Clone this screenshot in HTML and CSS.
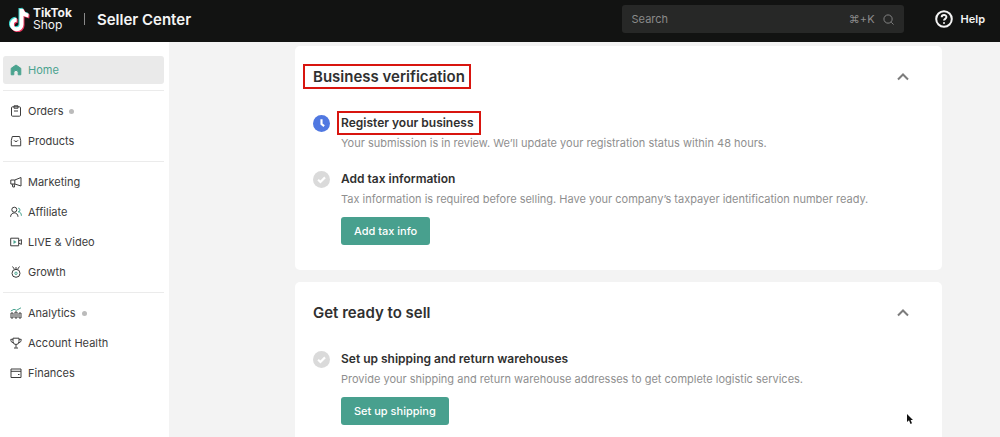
FILE: index.html
```html
<!DOCTYPE html>
<html lang="en">
<head>
  <meta charset="UTF-8">
  <meta name="viewport" content="width=device-width, initial-scale=1.0">
  <title>TikTok Shop Seller Center</title>
  <link rel="stylesheet" href="styles.css">
</head>
<body>
  <!-- Header -->
  <header class="topbar">
    <a href="#" class="brand">
      <svg class="brand-logo" viewBox="0 0 22 26">
        <path class="note note-cyan" d="M11.500 2v15.500a4.800 4.800 0 1 1-4.800-4.800M11.500 2c.5 4 3 6 7 6.500"/>
        <path class="note note-red" d="M13.500 4v15.500a4.800 4.800 0 1 1-4.800-4.800M13.500 4c.5 4 3 6 7 6.500"/>
        <path class="note" d="M12.500 3v15.500a4.800 4.800 0 1 1-4.800-4.800M12.500 3c.5 4 3 6 7 6.500"/>
      </svg>
      <span class="brand-name"><strong>TikTok</strong><span>Shop</span></span>
    </a>
    <span class="brand-divider"></span>
    <span class="product-name">Seller Center</span>
    <label class="search">
      <input type="search" placeholder="Search" aria-label="Search">
      <span class="shortcut">⌘+K</span>
      <svg class="search-icon" viewBox="0 0 12 12"><circle cx="5.500" cy="5.500" r="4.500"/><path d="M9 9l2.500 2.500"/></svg>
    </label>
    <a href="#" class="help">
      <svg class="help-icon" viewBox="0 0 18 18"><circle cx="9" cy="9" r="7.800"/><path d="M6.700 7.300c0-3 4.700-3 4.700-.2 0 1.700-2.400 1.800-2.400 3.500M9 12.200v1.600"/></svg>
      Help
    </a>
  </header>

  <div class="layout">
    <!-- Sidebar -->
    <nav class="sidebar">
      <ul class="menu">
        <li><a href="#" class="menu-link active">
          <svg class="icon" viewBox="0 0 12 12"><path class="solid" d="M6 1 1.200 4.300v6.500h2.600V8.500a2.200 2.200 0 0 1 4.400 0v2.300h2.600V4.300z"/></svg>Home</a></li>
      </ul>
      <ul class="menu">
        <li><a href="#" class="menu-link">
          <svg class="icon" viewBox="0 0 12 12"><rect x="1.500" y="1.800" width="9" height="9.400" rx="1"/><path d="M4 .8h4v2.400H4zM4 6h4"/></svg>Orders<span class="dot"></span></a></li>
        <li><a href="#" class="menu-link">
          <svg class="icon" viewBox="0 0 12 12"><path d="M2.300 1.500h7.400l1 4v5.300H1.300V5.500zM4 5.300c.7 1.600 3.300 1.600 4 0"/></svg>Products</a></li>
      </ul>
      <ul class="menu">
        <li><a href="#" class="menu-link">
          <svg class="icon" viewBox="0 0 12 12"><path d="M.8 4h4L11 1.500v8.500L4.800 8h-4zM4.800 4v4M2.200 8l.6 3h1.700L4.200 8"/></svg>Marketing</a></li>
        <li><a href="#" class="menu-link">
          <svg class="icon" viewBox="0 0 12 12"><circle cx="4.300" cy="3.700" r="2.500"/><path d="M.6 10.800c0-5.200 7.400-5.200 7.400 0"/><path class="accent" d="M8.200 2.200a1.800 1.800 0 0 1 0 3.600c1.800 0 3.200 1.200 3.200 4"/></svg>Affiliate</a></li>
        <li><a href="#" class="menu-link">
          <svg class="icon" viewBox="0 0 12 12"><path d="M.7 2.200h8v7.600h-8zM8.700 5l2.700-1.400v4.800L8.700 7"/><path class="accent-fill" d="M3.500 4 6.500 6 3.500 8z"/></svg>LIVE &amp; Video</a></li>
        <li><a href="#" class="menu-link">
          <svg class="icon" viewBox="0 0 12 12"><circle cx="6" cy="7.300" r="4"/><path d="M2.500.5l2 2.800M9.500.5l-2 2.800M6 1v2.200"/><circle class="accent" cx="6" cy="7.300" r="1.200"/></svg>Growth</a></li>
      </ul>
      <ul class="menu">
        <li><a href="#" class="menu-link">
          <svg class="icon" viewBox="0 0 12 12"><path d="M1 6h2v5H1zM5 5h2v6H5zM9 6h2v5H9z"/><path class="accent" d="M.8 4 4 2.300l2.500 1L11 .8"/></svg>Analytics<span class="dot"></span></a></li>
        <li><a href="#" class="menu-link">
          <svg class="icon" viewBox="0 0 12 12"><path d="M3 1.200h6v3.300a3 3 0 0 1-6 0zM3 2.300H.8c0 2.200.7 3.200 2.400 3.400M9 2.300h2.200c0 2.200-.7 3.200-2.400 3.400M6 7.500v3.200M4 11h4"/></svg>Account Health</a></li>
        <li><a href="#" class="menu-link">
          <svg class="icon" viewBox="0 0 12 12"><path d="M1 2h10v8.500H1zM1 4.300h10M8 7.500h1.500"/></svg>Finances</a></li>
      </ul>
    </nav>

    <!-- Setup steps -->
    <main class="content">
      <section class="card">
        <div class="card-header">
          <h2><span class="marked">Business verification</span></h2>
          <button class="toggle" aria-label="Collapse business verification">
            <svg viewBox="0 0 12 8"><path d="M1 6.500l5-5 5 5"/></svg>
          </button>
        </div>
        <div class="step">
          <svg class="status" viewBox="0 0 16 16"><circle class="pending" cx="8" cy="8" r="8"/><path d="M8 4v4.500l2.500 2"/></svg>
          <div class="step-info">
            <h3><span class="marked marked-small">Register your business</span></h3>
            <p>Your submission is in review. We’ll update your registration status within 48 hours.</p>
          </div>
        </div>
        <div class="step">
          <svg class="status" viewBox="0 0 16 16"><circle cx="8" cy="8" r="8"/><path d="M4.800 8.200l2.200 2.100 4.300-4.300"/></svg>
          <div class="step-info">
            <h3>Add tax information</h3>
            <p>Tax information is required before selling. Have your company’s taxpayer identification number ready.</p>
            <button class="action">Add tax info</button>
          </div>
        </div>
      </section>

      <section class="card">
        <div class="card-header">
          <h2>Get ready to sell</h2>
          <button class="toggle" aria-label="Collapse get ready to sell">
            <svg viewBox="0 0 12 8"><path d="M1 6.500l5-5 5 5"/></svg>
          </button>
        </div>
        <div class="step">
          <svg class="status" viewBox="0 0 16 16"><circle cx="8" cy="8" r="8"/><path d="M4.800 8.200l2.200 2.100 4.300-4.300"/></svg>
          <div class="step-info">
            <h3>Set up shipping and return warehouses</h3>
            <p>Provide your shipping and return warehouse addresses to get complete logistic services.</p>
            <button class="action">Set up shipping</button>
          </div>
        </div>
      </section>
    </main>
  </div>

  <svg class="pointer" viewBox="0 0 8 12"><path d="M1 1v8l2-1.700L4.500 11 6 10.300 4.600 7H7z"/></svg>
</body>
</html>
```
FILE: styles.css
```css
/* General */
* {
  box-sizing: border-box;
}
body {
  margin: 0;
  height: 100vh;
  display: flex;
  flex-direction: column;
  overflow: hidden;
  position: relative;
  font-family: Inter, "Liberation Sans", sans-serif;
  font-size: 11px;
  background-color: #f3f3f3;
  color: #3c3c3c;
}
a {
  color: inherit;
  text-decoration: none;
}
button,
input {
  font-family: inherit;
}
svg {
  display: block;
  flex-shrink: 0;
  fill: none;
  stroke: currentColor;
}
/* Header */
.topbar {
  flex-shrink: 0;
  height: 42px;
  padding: 0 15px 4px 9px;
  display: flex;
  align-items: center;
  background-color: #121312;
  color: #f4f4f4;
}
.brand {
  display: flex;
  align-items: center;
  gap: 2px;
}
.brand-logo {
  width: 22px;
  height: 26px;
}
.note {
  stroke: #fff;
  stroke-width: 4;
}
.note-cyan {
  stroke: #3fd6cf;
}
.note-red {
  stroke: #e8365d;
}
.brand-name {
  display: flex;
  flex-direction: column;
  font-size: 12px;
  line-height: 12px;
}
.brand-divider {
  width: 1px;
  height: 12px;
  margin: 0 12px;
  background-color: #8a8a8a;
}
.product-name {
  font-size: 15px;
  font-weight: 600;
}
.search {
  width: 282px;
  height: 28px;
  margin-left: auto;
  padding: 0 10px;
  display: flex;
  align-items: center;
  gap: 8px;
  border-radius: 3px;
  background-color: #272827;
  color: #8a8a8a;
}
.search input {
  flex: 1;
  min-width: 0;
  padding: 0;
  border: none;
  outline: none;
  background: none;
  font-size: 11px;
  color: #f4f4f4;
}
.search input::placeholder {
  color: #8a8a8a;
}
.search-icon {
  width: 11px;
  height: 11px;
}
.help {
  margin-left: 31px;
  display: flex;
  align-items: center;
  gap: 8px;
  font-weight: 600;
}
.help-icon {
  width: 18px;
  height: 18px;
  stroke-width: 2;
}
/* Sidebar */
.layout {
  flex: 1;
  min-height: 0;
  display: flex;
}
.sidebar {
  width: 169px;
  flex-shrink: 0;
  padding: 8px 5px 0 3px;
  background-color: #fff;
}
.menu {
  margin: 0;
  padding: 5px 0;
  list-style: none;
}
.menu + .menu {
  border-top: 1px solid #ebebeb;
}
.menu li {
  padding: 1px 0;
}
.menu-link {
  height: 28px;
  padding: 0 7px;
  display: flex;
  align-items: center;
  gap: 6px;
  border-radius: 3px;
}
.menu-link.active {
  background-color: #eaeaea;
  color: #4aa38f;
}
.icon {
  width: 12px;
  height: 12px;
}
.solid {
  fill: currentColor;
}
.accent {
  stroke: #4aa38f;
}
.accent-fill {
  fill: #4aa38f;
  stroke: none;
}
.dot {
  width: 5px;
  height: 5px;
  border-radius: 50%;
  background-color: #bbb;
}
/* Cards */
.content {
  flex: 1;
  min-width: 0;
  padding: 4px 58px 0 126px;
  overflow: hidden;
}
.card {
  margin-bottom: 12px;
  padding: 18px 33px 25px 18px;
  border-radius: 5px;
  background-color: #fff;
}
.card-header {
  display: flex;
  align-items: center;
  justify-content: space-between;
  margin-bottom: 24px;
}
.card-header h2 {
  margin: 0;
  font-size: 15px;
  font-weight: 600;
  line-height: 25px;
  color: #303030;
}
.toggle {
  padding: 0;
  border: none;
  background: none;
  color: #7c7c7c;
  cursor: pointer;
}
.toggle svg {
  width: 12px;
  height: 8px;
  stroke-width: 2;
}
/* Red frames round the highlighted titles */
.marked {
  display: block;
  margin-left: -10px;
  padding: 0 4px 0 8px;
  border: 2px solid #d8150f;
  line-height: 21px;
}
.marked-small {
  margin: -2px 0 -2px -4px;
  padding: 0 6px 0 2px;
  line-height: 20px;
}
/* Steps */
.step {
  display: flex;
  gap: 11px;
}
.step + .step {
  margin-top: 16px;
}
.status {
  width: 17px;
  height: 17px;
  margin-top: 2px;
  stroke: #fff;
  stroke-width: 2;
}
.status circle {
  fill: #dadada;
  stroke: none;
}
.status .pending {
  fill: #5078e1;
}
.step-info {
  display: flex;
  flex-direction: column;
  align-items: flex-start;
}
.step-info h3 {
  margin: 0;
  font-size: 12px;
  font-weight: 600;
  line-height: 20px;
  color: #303030;
}
.step-info p {
  margin: 0;
  line-height: 20px;
  color: #8f8f8f;
}
.action {
  height: 28px;
  margin-top: 8px;
  padding: 0 13px;
  border: none;
  border-radius: 3px;
  background-color: #48a08e;
  color: #fff;
  font-size: 11px;
  font-weight: 500;
  cursor: pointer;
}
/* Mouse pointer */
.pointer {
  position: absolute;
  right: 86px;
  bottom: 12px;
  width: 8px;
  height: 12px;
  fill: #111;
  stroke: none;
}
```
